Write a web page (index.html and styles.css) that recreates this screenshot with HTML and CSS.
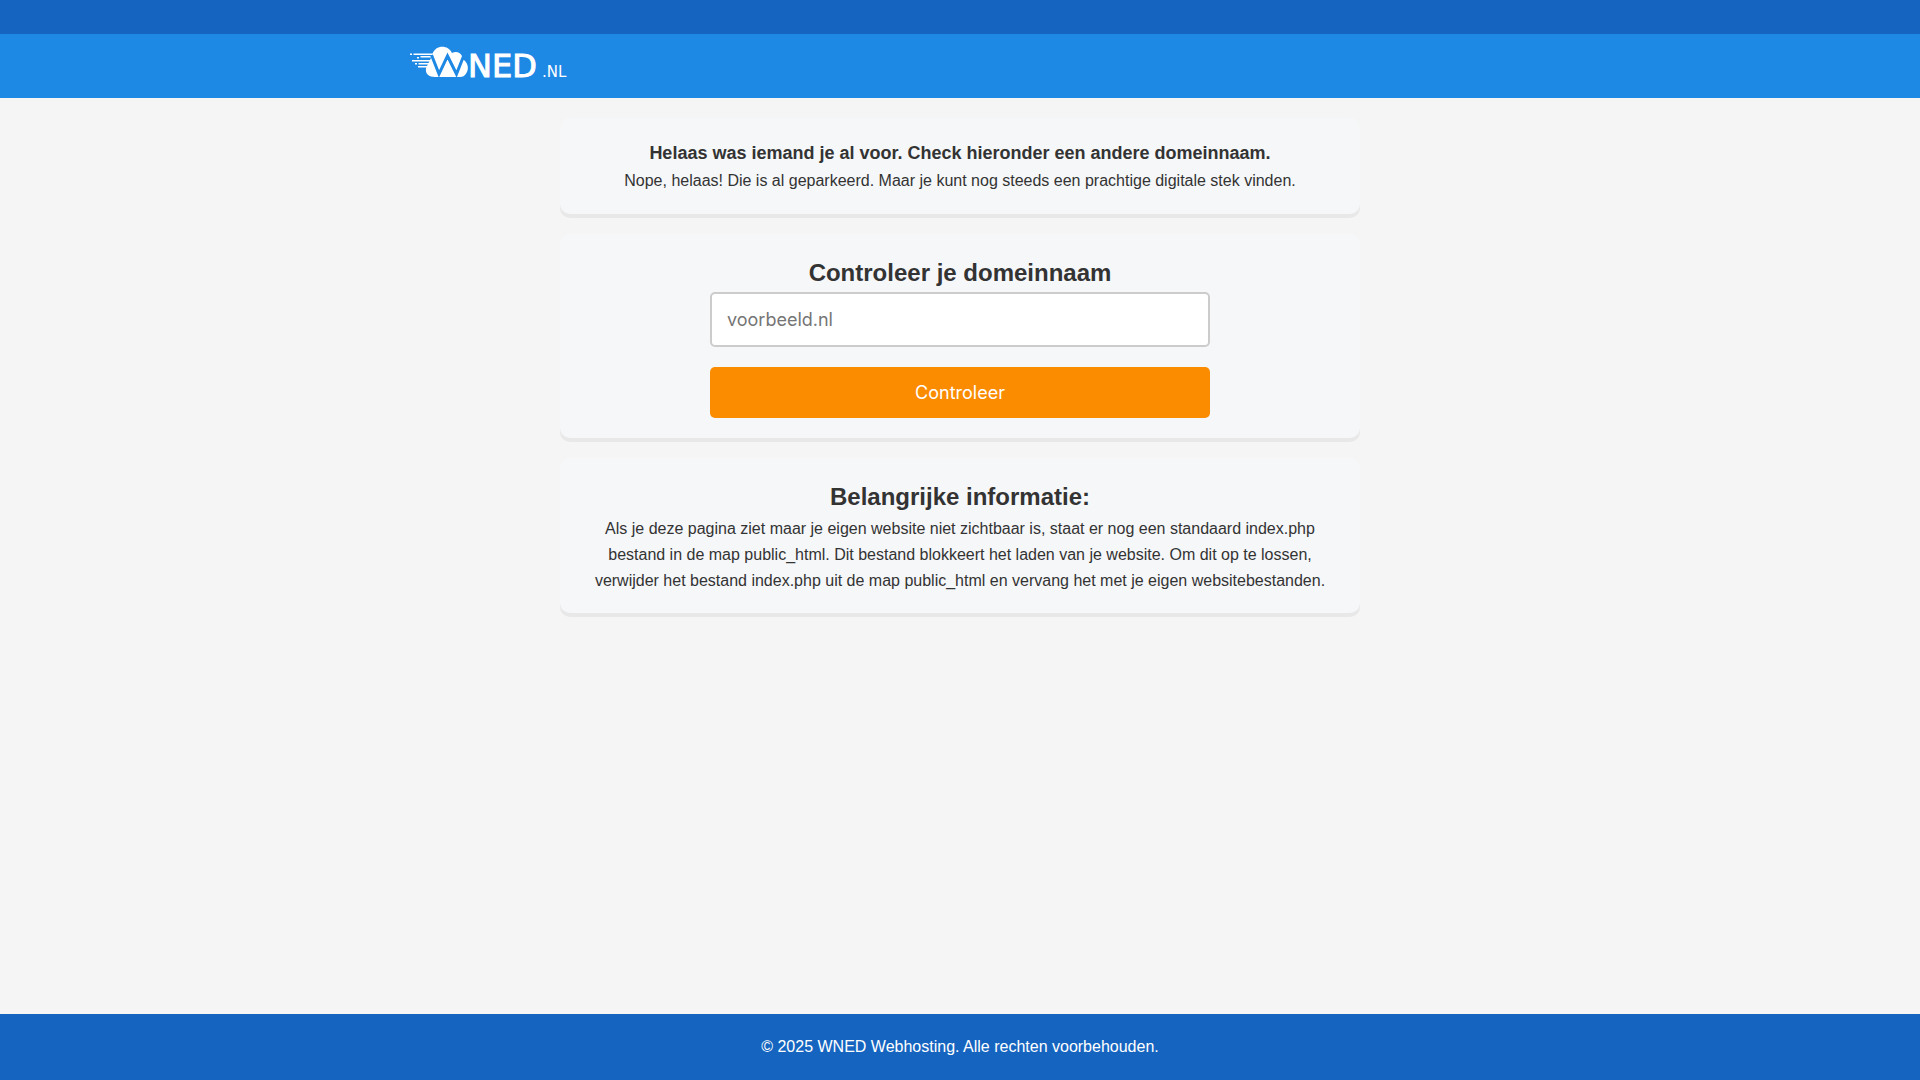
FILE: index.html
```html
<!DOCTYPE html>
<html lang="nl">
<head>
    <meta charset="UTF-8">
    <meta name="viewport" content="width=device-width, initial-scale=1.0">
    <title>WNED Webhosting</title>
    <link rel="stylesheet" href="styles.css">
</head>
<body>
    <div class="top-bar"></div>
    <header class="header">
        <div class="header-inner">
            <a href="#" class="logo" aria-label="WNED.NL">
                <svg width="170" height="40" viewBox="0 0 170 40" fill="#fff">
                    <!-- speed lines -->
                    <path d="M0 7.500h2v1.500H0zM3.500 7.500H26v1.500H3.500zM7 11h2v1.500H7zM10.500 10H26v1.500H10.500zM2 14h22v1.500H2zM5 17h2v1.500H5zM8.500 17H24v1.500H8.500zM8 20h16v1.500H8z"/>
                    <!-- cloud -->
                    <path d="M16 22L21 12L22.500 8C25 -1 38 -2 42 7C46 5 50 6 52 10V14H54C59 18 59 25 55 29C53 31 51 31 48 31H25C19 31 15 28 16 22Z"/>
                    <path d="M21.500 9L29 28L37.500 10L46.500 28L54 9" fill="none" stroke="#1e88e5" stroke-width="3"/>
                    <path d="M37.500 14L45 31H30Z"/>
                    <text class="logo-name" x="58" y="31">NED</text>
                    <text class="logo-tld" x="132" y="31">.NL</text>
                </svg>
            </a>
        </div>
    </header>

    <main class="container">
        <section class="card">
            <h3>Helaas was iemand je al voor. Check hieronder een andere domeinnaam.</h3>
            <p>Nope, helaas! Die is al geparkeerd. Maar je kunt nog steeds een prachtige digitale stek vinden.</p>
        </section>

        <section class="card">
            <h2><label for="domain">Controleer je domeinnaam</label></h2>
            <form class="domain-form">
                <input type="text" id="domain" name="domain" placeholder="voorbeeld.nl" required>
                <button type="submit">Controleer</button>
            </form>
        </section>

        <section class="card">
            <h2>Belangrijke informatie:</h2>
            <p>Als je deze pagina ziet maar je eigen website niet zichtbaar is, staat er nog een standaard index.php bestand in de map public_html. Dit bestand blokkeert het laden van je website. Om dit op te lossen, verwijder het bestand index.php uit de map public_html en vervang het met je eigen websitebestanden.</p>
        </section>
    </main>

    <footer class="footer">
        <p>&copy; 2025 WNED Webhosting. Alle rechten voorbehouden.</p>
    </footer>
</body>
</html>
```
FILE: styles.css
```css
* {
    box-sizing: border-box;
}
body {
    font-family: "Liberation Sans", Arial, sans-serif;
    font-size: 16px;
    line-height: 1.6;
    margin: 0;
    min-height: 100vh;
    background-color: #f5f5f5;
    color: #333;
    display: flex;
    flex-direction: column;
}
h2, h3, p {
    margin: 0;
}
h2 {
    font-size: 24px;
}
h3 {
    font-size: 18px;
    line-height: 30px;
}
.top-bar {
    height: 34px;
    background-color: #1565c0;
}
.header {
    background-color: #1e88e5;
    padding: 12px 20px;
}
.header-inner {
    max-width: 1100px;
    margin: 0 auto;
}
.logo,
.logo svg {
    display: block;
    width: 170px;
}
.logo svg {
    overflow: visible;
}
.logo-name,
.logo-tld {
    font-family: "DejaVu Sans", sans-serif;
}
.logo-name {
    font-size: 32px;
    stroke: #fff;
    stroke-width: 1px;
}
.logo-tld {
    font-size: 15px;
}
.container {
    flex: 1;
    width: 100%;
    max-width: 840px;
    margin: 0 auto;
    padding: 20px;
}
.card {
    background-color: #f6f7f9;
    padding: 20px;
    margin-bottom: 20px;
    border-radius: 10px;
    box-shadow: 0 4px 0 #e8e8e8;
    text-align: center;
}
.domain-form {
    display: flex;
    flex-direction: column;
    gap: 20px;
    max-width: 500px;
    margin: 0 auto;
}
.domain-form input,
.domain-form button {
    font-family: Inter, sans-serif;
    font-size: 18px;
    line-height: 21px;
    padding: 15px;
    border-radius: 5px;
}
.domain-form input {
    height: 55px;
    border: 2px solid #ccc;
    background-color: #fff;
}
.domain-form button {
    border: none;
    background-color: #fb8c00;
    color: #fff;
    cursor: pointer;
}
.domain-form button:hover {
    background-color: #ef6c00;
}
.footer {
    background-color: #1565c0;
    color: #fff;
    padding: 20px;
    text-align: center;
}
```
